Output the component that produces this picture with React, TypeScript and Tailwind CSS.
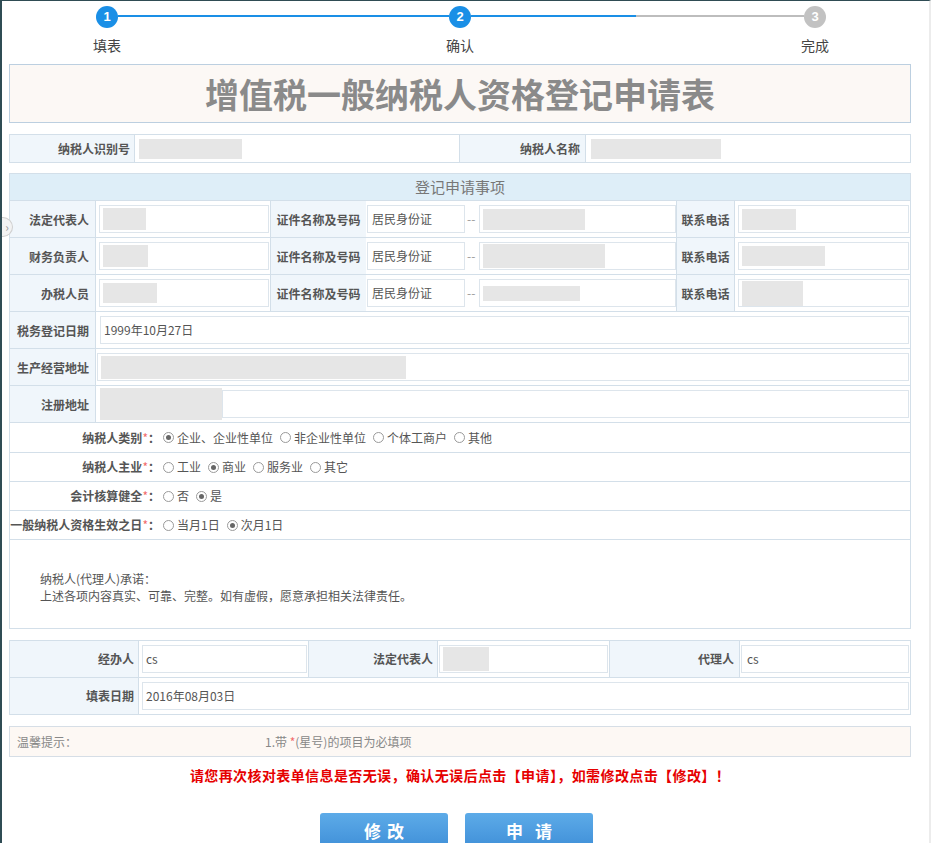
import React from "react";

const LBL =
  "flex items-center text-[12px] font-bold text-[#555] bg-[#f0f6fb] border-r border-[#d3dfe9] whitespace-nowrap";

function Label({ className = "", children }: { className?: string; children: React.ReactNode }) {
  return <div className={`${LBL} ${className}`}>{children}</div>;
}

function Box({ className = "", children }: { className?: string; children?: React.ReactNode }) {
  return (
    <div
      className={`h-[28px] bg-white border border-[#dde5ec] flex items-center px-[3px] text-[12px] text-[#555] ${className}`}
    >
      {children}
    </div>
  );
}

function Gray({ className = "" }: { className?: string }) {
  return <div className={`bg-[#e6e6e6] ${className}`} />;
}

function PersonRow({
  label,
  name,
  id,
  phone,
}: {
  label: string;
  name: React.ReactNode;
  id: React.ReactNode;
  phone: React.ReactNode;
}) {
  return (
    <div className="flex h-[37px] border-b border-[#d3dfe9]">
      <Label className="w-[86px] justify-end pr-[6px] pt-[2px]">{label}</Label>
      <div className="w-[175px] flex items-center pl-[3px] pr-[1px] border-r border-[#d3dfe9]">
        <Box className="flex-1">{name}</Box>
      </div>
      <Label className="w-[95px] justify-center border-r-0 pt-[2px]">证件名称及号码</Label>
      <div className="w-[99px] flex items-center pl-[1px]">
        <Box className="flex-1 px-[4px]">居民身份证</Box>
      </div>
      <div className="w-[212px] flex items-center border-r border-[#d3dfe9]">
        <span className="w-[12px] ml-[2px] text-[12px] text-[#999]">--</span>
        <Box className="flex-1">{id}</Box>
      </div>
      <Label className="w-[58px] justify-center pt-[2px]">联系电话</Label>
      <div className="flex-1 flex items-center pl-[3px] pr-[1px]">
        <Box className="flex-1">{phone}</Box>
      </div>
    </div>
  );
}

function Radio({ checked, label }: { checked?: boolean; label: string }) {
  return (
    <div className="flex items-center">
      <div className="w-[11px] h-[11px] rounded-full border border-[#9a9a9a] bg-white flex items-center justify-center">
        {checked && <div className="w-[5px] h-[5px] rounded-full bg-[#666]" />}
      </div>
      <span className="ml-[3px] text-[12px] text-[#555]">{label}</span>
    </div>
  );
}

function RadioRow({
  label,
  options,
  checked,
  h,
}: {
  label: string;
  options: string[];
  checked: number;
  h: string;
}) {
  return (
    <div className={`flex items-center border-b border-[#d3dfe9] ${h}`}>
      <div className="w-[150px] flex justify-end text-[12px] font-bold text-[#555] whitespace-nowrap">
        {label}
        <span className="text-[#f26b6b] font-normal">*</span>：
      </div>
      <div className="flex items-center gap-[7px] ml-[3px]">
        {options.map((o, i) => (
          <Radio key={o} label={o} checked={i === checked} />
        ))}
      </div>
    </div>
  );
}

function Step({ n, label, active }: { n: number; label: string; active: boolean }) {
  return (
    <div className="w-[22px] flex flex-col items-center">
      <div
        className={`w-[22px] h-[22px] rounded-full flex items-center justify-center text-white text-[13px] font-bold font-['Liberation_Sans',sans-serif] ${
          active ? "bg-[#1a8fe6]" : "bg-[#c2c2c2]"
        }`}
      >
        {n}
      </div>
      <div className="mt-[7px] text-[14px] leading-[20px] text-[#444] whitespace-nowrap">{label}</div>
    </div>
  );
}

export default function App() {
  return (
    <div className="relative w-[931px] h-[843px] overflow-hidden bg-white border-l-[2px] border-t-[1px] border-l-[#2f4c54] border-t-[#2f4c54] border-r-[2px] border-r-[#ececec] font-['Noto_Sans_CJK_SC','Liberation_Sans',sans-serif]">
      {/* stepper */}
      <div className="h-[63px] pt-[5px] flex items-start pl-[94px]">
        <Step n={1} label="填表" active />
        <div className="w-[331px] h-[2px] mt-[9px] bg-[#1a8fe6]" />
        <Step n={2} label="确认" active />
        <div className="w-[333px] h-[2px] mt-[9px] flex">
          <div className="w-[165px] bg-[#1a8fe6]" />
          <div className="flex-1 bg-[#bdbdbd]" />
        </div>
        <Step n={3} label="完成" active={false} />
      </div>

      <div className="ml-[7px] w-[902px]">
        {/* title */}
        <div className="h-[59px] border border-[#bccfe0] bg-[#fcf8f5] flex items-center justify-center">
          <span className="text-[34px] leading-[40px] font-bold text-[#8a8a8a]">
            增值税一般纳税人资格登记申请表
          </span>
        </div>

        {/* id row */}
        <div className="mt-[11px] h-[29px] border border-[#d3dfe9] flex">
          <Label className="w-[125px] justify-end pr-[4px]">纳税人识别号</Label>
          <div className="w-[325px] flex items-center pl-[4px] border-r border-[#d3dfe9]">
            <Gray className="w-[103px] h-[20px]" />
          </div>
          <Label className="w-[126px] justify-end pr-[5px]">纳税人名称</Label>
          <div className="flex-1 flex items-center pl-[5px]">
            <Gray className="w-[130px] h-[20px]" />
          </div>
        </div>

        {/* main section */}
        <div className="mt-[10px] border border-[#d3dfe9]">
          <div className="h-[27px] bg-[#deeef8] border-b border-[#d3dfe9] flex items-center justify-center text-[15px] text-[#777]">
            登记申请事项
          </div>
          <PersonRow
            label="法定代表人"
            name={<Gray className="w-[43px] h-[22px]" />}
            id={<Gray className="w-[102px] h-[21px]" />}
            phone={<Gray className="w-[54px] h-[21px]" />}
          />
          <PersonRow
            label="财务负责人"
            name={<Gray className="w-[45px] h-[22px]" />}
            id={<Gray className="w-[122px] h-[24px]" />}
            phone={<Gray className="w-[83px] h-[20px]" />}
          />
          <PersonRow
            label="办税人员"
            name={<Gray className="w-[54px] h-[20px]" />}
            id={<Gray className="w-[97px] h-[15px]" />}
            phone={<Gray className="w-[61px] h-[25px]" />}
          />
          <div className="flex h-[37px] border-b border-[#d3dfe9]">
            <Label className="w-[86px] justify-end pr-[6px] pt-[2px]">税务登记日期</Label>
            <div className="flex-1 flex items-center pl-[4px] pr-[1px]">
              <Box className="flex-1">1999年10月27日</Box>
            </div>
          </div>
          <div className="flex h-[37px] border-b border-[#d3dfe9]">
            <Label className="w-[86px] justify-end pr-[6px] pt-[2px]">生产经营地址</Label>
            <div className="flex-1 flex items-center pl-[1px] pr-[1px]">
              <Box className="flex-1 px-0">
                <Gray className="w-[305px] h-[23px]" />
              </Box>
            </div>
          </div>
          <div className="flex h-[37px] border-b border-[#d3dfe9]">
            <Label className="w-[86px] justify-end pr-[6px] pt-[2px]">注册地址</Label>
            <div className="flex-1 flex items-center pl-[4px] pr-[1px]">
              <Gray className="w-[122px] h-[32px]" />
              <Box className="flex-1 h-[26px]" />
            </div>
          </div>
          <RadioRow
            h="h-[30px]"
            label="纳税人类别"
            options={["企业、企业性单位", "非企业性单位", "个体工商户", "其他"]}
            checked={0}
          />
          <RadioRow h="h-[29px]" label="纳税人主业" options={["工业", "商业", "服务业", "其它"]} checked={1} />
          <RadioRow h="h-[29px]" label="会计核算健全" options={["否", "是"]} checked={1} />
          <RadioRow h="h-[29px]" label="一般纳税人资格生效之日" options={["当月1日", "次月1日"]} checked={1} />
          <div className="h-[88px] flex flex-col justify-center pl-[30px] pt-[6px] text-[12px] leading-[17px] text-[#555]">
            <div>纳税人(代理人)承诺：</div>
            <div>上述各项内容真实、可靠、完整。如有虚假，愿意承担相关法律责任。</div>
          </div>
        </div>

        {/* bottom table */}
        <div className="mt-[11px] border border-[#d3dfe9]">
          <div className="flex h-[37px] border-b border-[#d3dfe9]">
            <Label className="w-[129px] justify-end pr-[4px]">经办人</Label>
            <div className="w-[170px] flex items-center pl-[3px] pr-[1px] border-r border-[#d3dfe9]">
              <Box className="flex-1">cs</Box>
            </div>
            <Label className="w-[129px] justify-end pr-[4px]">法定代表人</Label>
            <div className="w-[172px] flex items-center pl-[1px] pr-[1px] border-r border-[#d3dfe9]">
              <Box className="flex-1 px-[1px]">
                <Gray className="w-[46px] h-[24px]" />
              </Box>
            </div>
            <Label className="w-[130px] justify-end pr-[5px]">代理人</Label>
            <div className="flex-1 flex items-center pl-[1px] pr-[1px]">
              <Box className="flex-1 px-[5px]">cs</Box>
            </div>
          </div>
          <div className="flex h-[36px]">
            <Label className="w-[129px] justify-end pr-[4px]">填表日期</Label>
            <div className="flex-1 flex items-center pl-[3px] pr-[1px]">
              <Box className="flex-1">2016年08月03日</Box>
            </div>
          </div>
        </div>

        {/* tips */}
        <div className="mt-[11px] h-[31px] border border-[#d6dee6] bg-[#fdf8f4] flex items-center text-[12px] text-[#888]">
          <span className="ml-[7px] w-[248px]">温馨提示：</span>
          <span>
            1.带 <span className="text-[#f26b6b]">*</span>(星号)的项目为必填项
          </span>
        </div>

        <div className="mt-[8px] h-[20px] flex items-center justify-center text-[14px] font-bold text-[#e60000] tracking-[0.4px]">
          请您再次核对表单信息是否无误，确认无误后点击【申请】，如需修改点击【修改】！
        </div>

        <div className="mt-[28px] flex gap-[17px] ml-[311px]">
          <button className="w-[128px] h-[36px] rounded-t-[3px] bg-gradient-to-b from-[#5dabe8] to-[#3f8fd8] text-white text-[17px] font-bold tracking-[6px] pl-[6px] flex items-center justify-center">
            修改
          </button>
          <button className="w-[128px] h-[36px] rounded-t-[3px] bg-gradient-to-b from-[#5dabe8] to-[#3f8fd8] text-white text-[17px] font-bold tracking-[12px] pl-[12px] flex items-center justify-center">
            申请
          </button>
        </div>
      </div>

      {/* side tab */}
      <div className="absolute left-0 top-[216px] w-[11px] h-[20px] rounded-r-full bg-[#f2f2f2] border border-l-0 border-[#cfcfcf] flex items-center justify-center text-[12px] leading-none text-[#999]">
        ›
      </div>
    </div>
  );
}
